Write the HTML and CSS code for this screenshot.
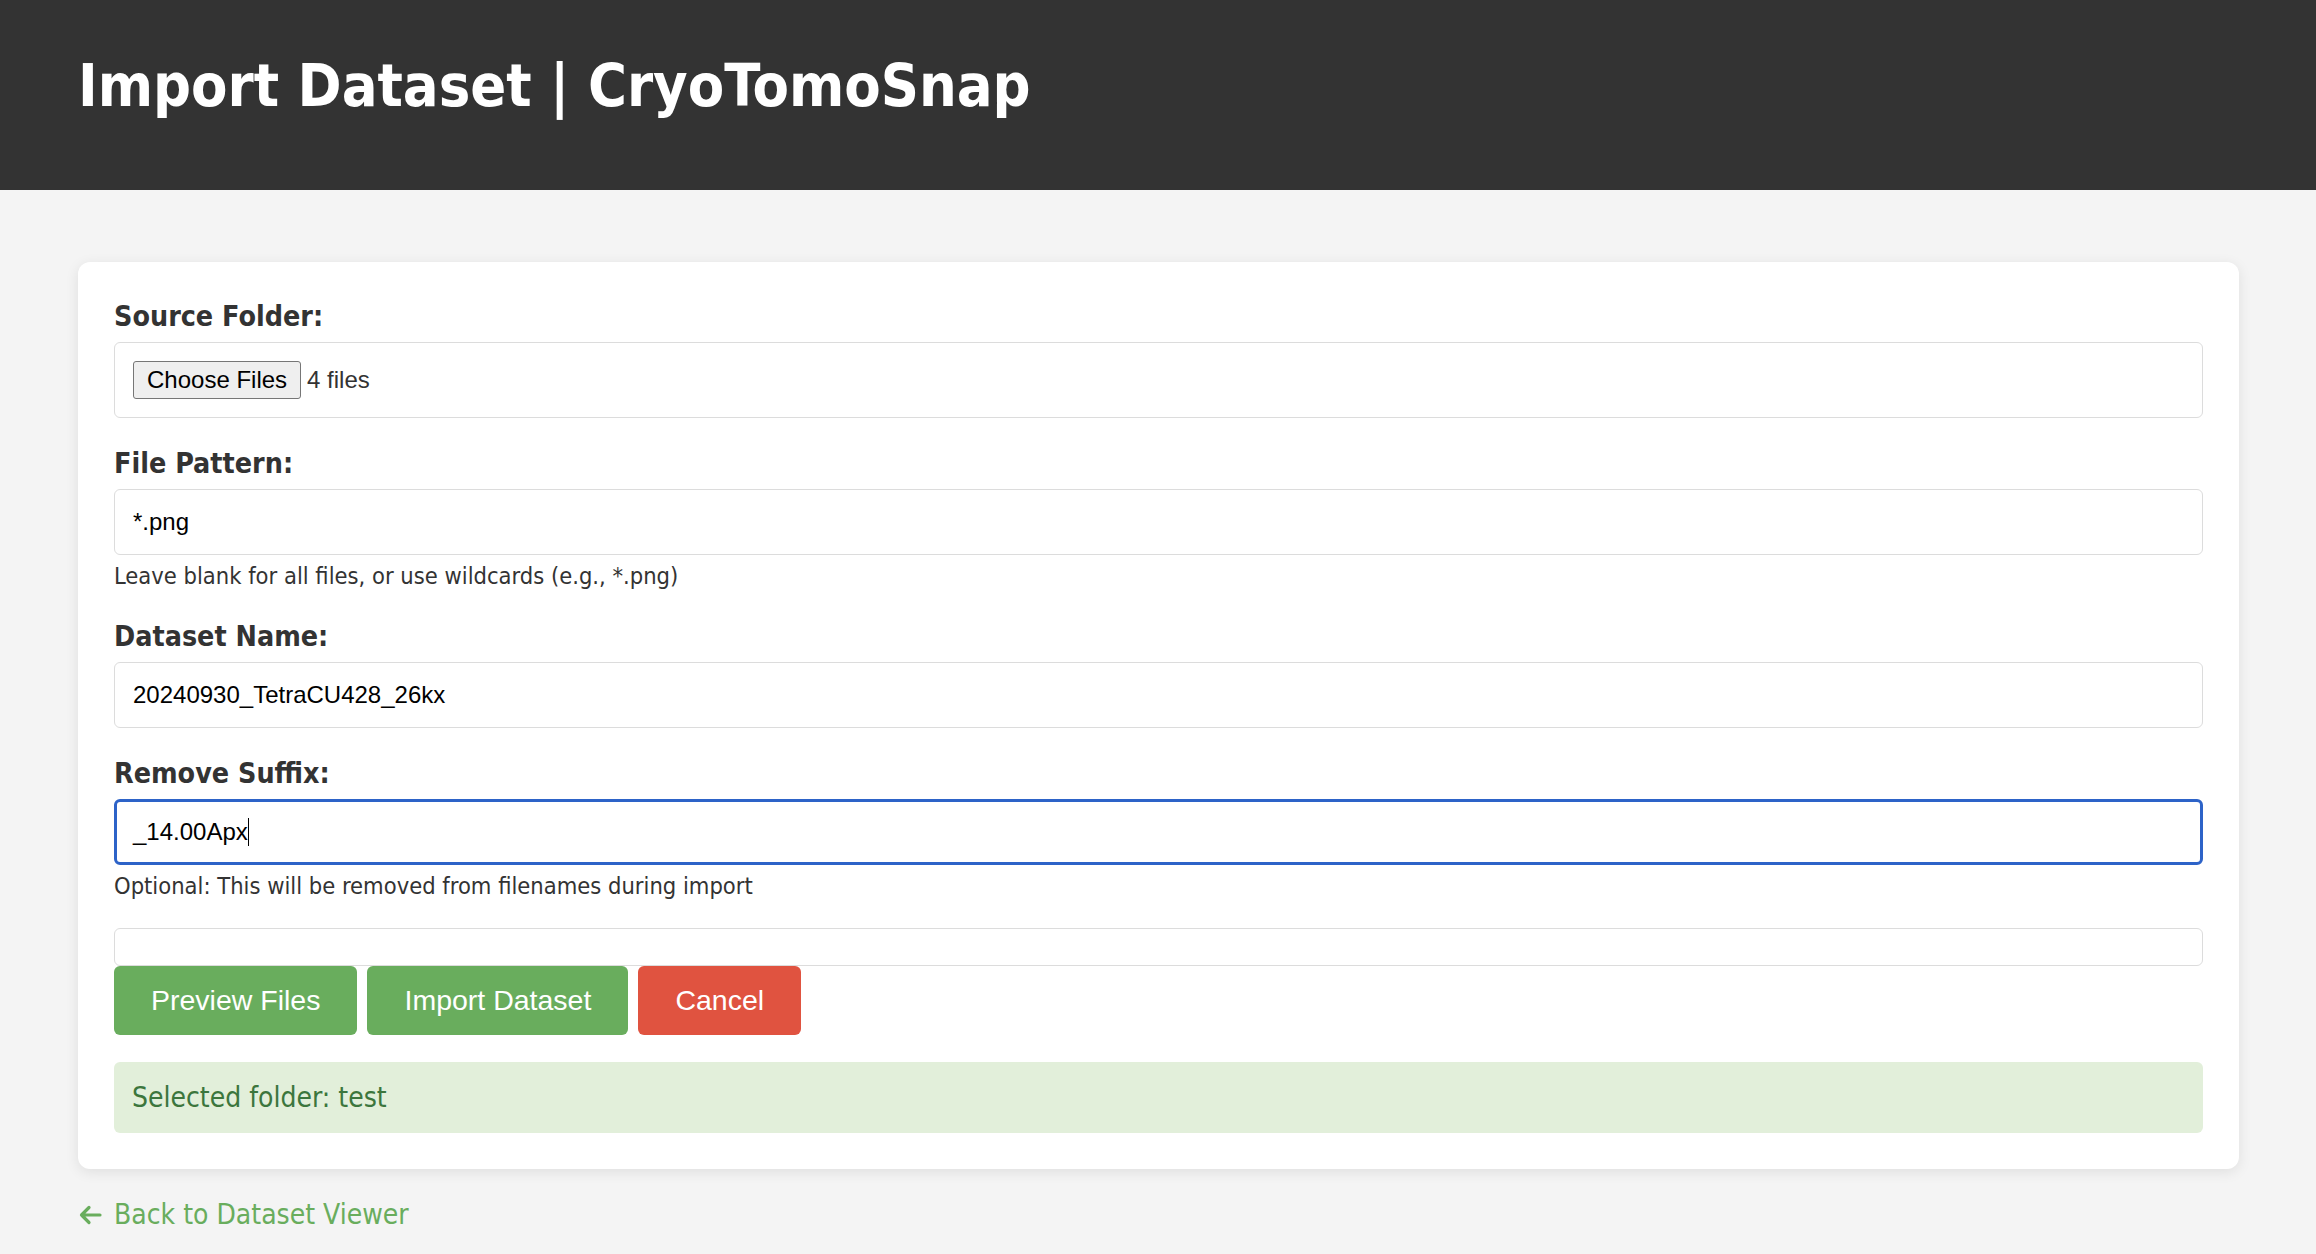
FILE: index.html
```html
<!DOCTYPE html>
<html lang="en">
<head>
<meta charset="utf-8">
<title>Import Dataset | CryoTomoSnap</title>
<link rel="stylesheet" href="styles.css">
</head>
<body>
<header class="topbar">
  <h1 class="title">Import Dataset | CryoTomoSnap</h1>
</header>
<main class="page">
  <section class="card">
    <div class="group">
      <label class="label">Source Folder:</label>
      <div class="box file-box">
        <span class="file-btn">Choose Files</span>
        <span class="file-count">4 files</span>
      </div>
    </div>
    <div class="group">
      <label class="label" for="pattern">File Pattern:</label>
      <input class="box input" id="pattern" type="text" value="*.png">
      <div class="help">Leave blank for all files, or use wildcards (e.g., *.png)</div>
    </div>
    <div class="group">
      <label class="label" for="dsname">Dataset Name:</label>
      <input class="box input" id="dsname" type="text" value="20240930_TetraCU428_26kx">
    </div>
    <div class="group">
      <label class="label">Remove Suffix:</label>
      <div class="box input focused"><span>_14.00Apx</span><span class="caret"></span></div>
      <div class="help">Optional: This will be removed from filenames during import</div>
    </div>
    <div class="box preview"></div>
    <div class="actions">
      <button class="btn btn-green">Preview Files</button>
      <button class="btn btn-green">Import Dataset</button>
      <button class="btn btn-red">Cancel</button>
    </div>
    <div class="status">Selected folder: test</div>
  </section>
  <a class="back" href="#">
    <svg class="back-icon" width="24" height="20" viewBox="0 0 24 20" aria-hidden="true">
      <path d="M11 2.5 L3.5 10 L11 17.5 M3.5 10 H22" fill="none" stroke="#69ad5d" stroke-width="3.2" stroke-linecap="round" stroke-linejoin="round"/>
    </svg>
    <span>Back to Dataset Viewer</span>
  </a>
</main>
</body>
</html>
```

FILE: styles.css
```css
html, body {
  margin: 0;
  padding: 0;
}
body {
  background: #f4f4f4;
  font-family: "DejaVu Sans Condensed", "DejaVu Sans", sans-serif;
  font-stretch: condensed;
  color: #333;
}
.topbar {
  background: #333333;
  height: 190px;
  box-sizing: border-box;
  padding: 52px 78px 0 78px;
}
.title {
  margin: 0;
  color: #fff;
  font-size: 59px;
  font-weight: bold;
  line-height: 67px;
  white-space: nowrap;
}
.page {
  padding: 72px 77px 40px 78px;
}
.card {
  background: #fff;
  border-radius: 12px;
  box-shadow: 0 3px 14px rgba(0, 0, 0, 0.09);
  padding: 36px;
}
.group {
  margin-bottom: 27px;
}
.label {
  display: block;
  font-size: 28.4px;
  font-weight: bold;
  line-height: 38px;
  margin-bottom: 6px;
  color: #333;
}
.box {
  display: block;
  width: 100%;
  box-sizing: border-box;
  border: 1px solid #dcdcdc;
  border-radius: 6px;
  background: #fff;
}
.file-box {
  padding: 18px;
  display: flex;
  align-items: center;
  gap: 6px;
  font-family: "Liberation Sans", Arial, sans-serif;
  font-stretch: normal;
  font-size: 24px;
}
.file-btn {
  display: inline-block;
  height: 38px;
  box-sizing: border-box;
  padding: 0 13px;
  line-height: 36px;
  background: #efefef;
  border: 1px solid #767676;
  border-radius: 3px;
  color: #000;
}
.file-count {
  color: #333;
}
.input {
  padding: 18px;
  font-family: "Liberation Sans", Arial, sans-serif;
  font-stretch: normal;
  font-size: 24px;
  line-height: 28px;
  height: 66px;
  color: #000;
  outline: none;
}
.focused {
  border: 3px solid #2d63c8;
  padding: 16px;
  display: flex;
  align-items: center;
}
.caret {
  display: inline-block;
  width: 1.5px;
  height: 28px;
  background: #000;
}
.help {
  font-size: 23.5px;
  line-height: 30px;
  margin-top: 6px;
  color: #333;
}
.preview {
  padding: 18px;
  height: 38px;
}
.actions {
  display: flex;
  gap: 10px;
}
.btn {
  border: none;
  border-radius: 6px;
  color: #fff;
  font-family: "Liberation Sans", Arial, sans-serif;
  font-size: 28.5px;
  line-height: 33px;
  padding: 18px 37px;
  cursor: pointer;
}
.btn-green {
  background: #69ad5d;
}
.btn-red {
  background: #e05340;
}
.status {
  margin-top: 27px;
  background: #e2efda;
  color: #3c763d;
  border-radius: 6px;
  padding: 18px;
  font-size: 28px;
  line-height: 35px;
}
.back {
  display: inline-flex;
  align-items: center;
  gap: 12px;
  margin-top: 30px;
  color: #69ad5d;
  text-decoration: none;
  font-size: 28px;
  line-height: 31px;
}
.back-icon {
  display: block;
}
```
